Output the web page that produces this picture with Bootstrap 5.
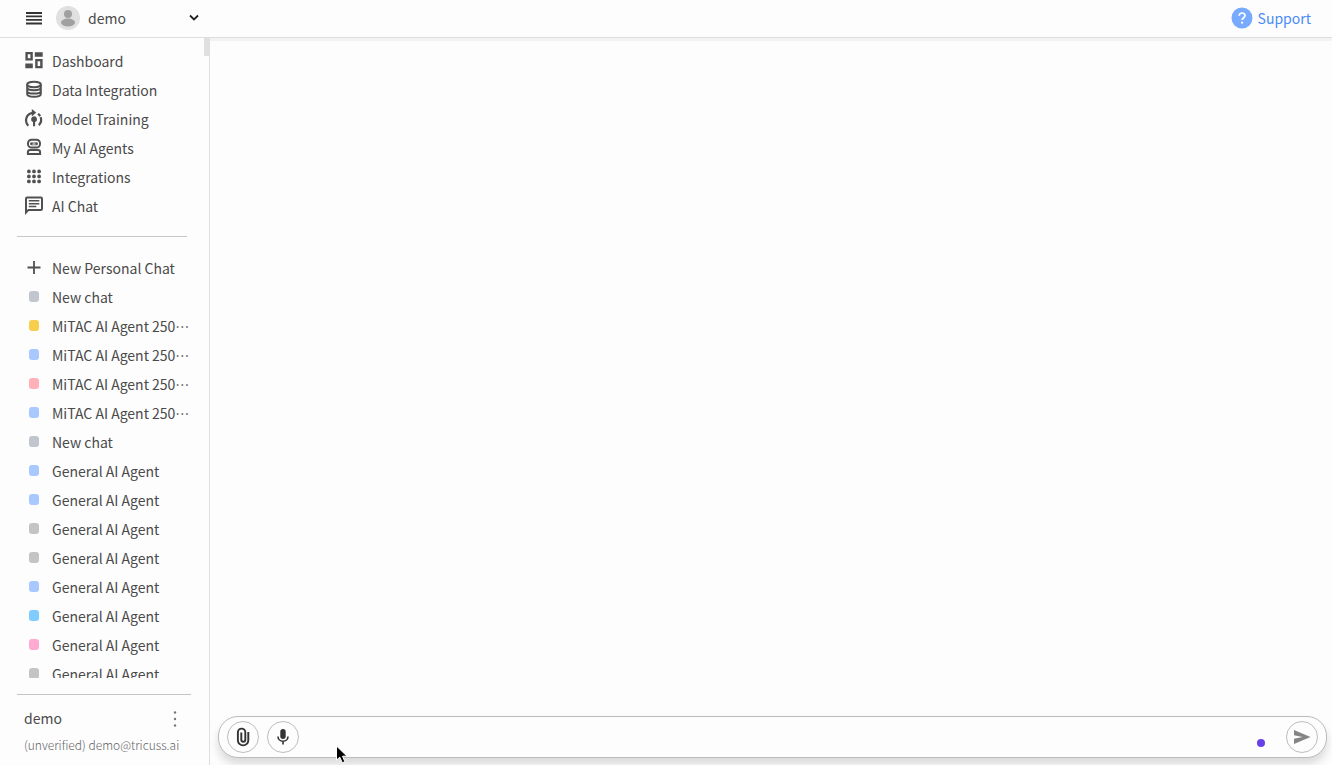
<!DOCTYPE html>
<html lang="en">
<head>
<meta charset="utf-8">
<meta name="viewport" content="width=device-width, initial-scale=1">
<title>AI Chat</title>
<link href="https://cdn.jsdelivr.net/npm/bootstrap@5.3.0/dist/css/bootstrap.min.css" rel="stylesheet">
<style>
body { font-family: "Noto Sans CJK TC", sans-serif; font-size: 14px; line-height: 29px; color: #4a4a4a; background: #fdfdfd; }
button { color: inherit; }
.topbar { height: 38px; border-bottom: 1px solid #dedede; padding: 0 21px 0 26px; }
.topbar svg { margin-bottom: 2px; }
.account { width: 173px; gap: 14px; }
.account-btn, .account-btn:hover { font-size: inherit; line-height: inherit; color: inherit; }
.support { color: #4a8cf7; gap: 5px; }
.sidebar { width: 210px; border-right: 1px solid #dedede; }
.side-scroll { padding: 9px 0 0 17px; margin-bottom: 16px; scrollbar-width: none; }
.side-scroll::-webkit-scrollbar { display: none; }
.thumb { top: 0; right: 0; width: 5px; height: 18px; background: #e0e0e0; }
.side-link { height: 29px; padding-left: 7px; gap: 8px; color: inherit; white-space: nowrap; }
.side-link svg { width: 20px; height: 21px; margin-bottom: 2px; flex: none; }
.divider { width: 170px; margin: 15px 0 17px; border-top: 1px solid #c8c8c8; opacity: 1; }
.dot { width: 10px; height: 11px; border-radius: 3px; margin: 0 5px 2px; flex: none; }
.c-slate { background: #c0c5ce; } .c-gold { background: #f7cf4d; } .c-blue { background: #a8c8ff; }
.c-rose { background: #ffb0b8; } .c-gray { background: #c4c4c4; } .c-sky { background: #80ccff; } .c-pink { background: #ffaad2; }
.profile { margin: 0 18px 0 17px; padding: 9px 7px 8px; border-top: 1px solid #c4c4c4; }
.mail { font-size: 12px; font-weight: 300; line-height: 24px; color: #666; white-space: nowrap; }
.chat { box-shadow: inset 0 3px 0 #f3f3f3; }
.composer { height: 42px; margin: 0 5px 7px 8px; padding: 0 8px; gap: 8px; border: 1px solid #bcbcbc; border-radius: 20px; background: #fdfdfd; box-shadow: 0 6px 8px #dadada; }
.round { width: 32px; height: 32px; border: 1px solid #bebebe; border-radius: 50%; background: #fdfdfd; flex: none; }
.prompt, .prompt:focus { border: 0; box-shadow: none; background: transparent; height: 32px; }
.busy { width: 8px; height: 8px; margin: 12px 13px 0 0; border-radius: 50%; background: #6840e8; flex: none; }
.pointer { left: 335px; top: 745px; pointer-events: none; }
</style>
</head>
<body>
<div class="d-flex flex-column vh-100 overflow-hidden">
  <header class="topbar d-flex flex-shrink-0 align-items-center justify-content-between">
    <div class="account d-flex align-items-center">
      <button type="button" class="btn p-0 border-0 d-flex" aria-label="Menu">
        <svg width="16" height="14" fill="#333"><path d="M0 1h16v2H0zM0 4.5h16v1.8H0zM0 8h16v1.8H0zM0 11.5h16v2H0z"/></svg>
      </button>
      <button type="button" class="account-btn btn p-0 border-0 d-flex flex-fill align-items-center gap-2">
        <svg width="24" height="24"><circle cx="12" cy="12" r="12" fill="#e0e0e0"/><circle cx="12" cy="8" r="4" fill="#a0a0a0"/><ellipse cx="12" cy="16.5" rx="7" ry="4" fill="#a0a0a0"/></svg>
        <span>demo</span>
        <svg class="ms-auto" width="10" height="8" fill="none" stroke="#222" stroke-width="1.8"><path d="M1 1.5l4 4 4-4"/></svg>
      </button>
    </div>
    <a href="#" class="support d-flex align-items-center text-decoration-none">
      <svg width="22" height="22"><circle cx="11" cy="11" r="10.5" fill="#78aaff"/><path d="M8.2 8.7c0-3.7 5.8-3.5 5.8-.2 0 2.2-2.9 2.3-2.9 4.6" fill="none" stroke="#fff" stroke-width="1.7"/><circle cx="11.1" cy="15.7" r="1.1" fill="#fff"/></svg>
      <span>Support</span>
    </a>
  </header>
  <div class="d-flex flex-fill overflow-hidden">
    <aside class="sidebar d-flex flex-column flex-shrink-0 position-relative">
      <div class="thumb position-absolute"></div>
      <nav class="side-scroll flex-fill overflow-auto">
        <a href="#" class="side-link d-flex align-items-center text-decoration-none"><svg viewBox="0 0 20 20" fill="none" stroke="#505050" stroke-width="2.4"><path d="M2.6 2.6h5v6.3h-5zM12.4 9.6h5v7h-5z"/><path d="M10.8 4h7.9M1.3 15.4h7.5" stroke-width="4.6"/></svg>Dashboard</a>
        <a href="#" class="side-link d-flex align-items-center text-decoration-none"><svg viewBox="0 0 20 20" fill="none" stroke="#505050" stroke-width="2"><ellipse cx="10" cy="5" rx="6.8" ry="2.7"/><path d="M3.2 5v9.5c0 3.7 13.6 3.7 13.6 0V5M3.2 8c0 3.6 13.6 3.6 13.6 0M3.2 11.4c0 3.6 13.6 3.6 13.6 0"/></svg>Data Integration</a>
        <a href="#" class="side-link d-flex align-items-center text-decoration-none"><svg viewBox="0 0 20 20" fill="#505050"><path d="M4.3 17.2C.5 13.5 1.4 5.2 8.8 4.3" fill="none" stroke="#505050" stroke-width="2.2"/><path d="M7.8.5l4.4 3.6-4.4 3.8zM10 7.7a3 3 0 0 1 1.1 5.8v4.3H9v-4.3A3 3 0 0 1 10 7.7z"/><path d="M14 5.4c4 2.6 4 8 .8 11.2" fill="none" stroke="#505050" stroke-width="2.2" stroke-dasharray="3 1.2 12"/></svg>Model Training</a>
        <a href="#" class="side-link d-flex align-items-center text-decoration-none"><svg viewBox="0 0 20 20" fill="none" stroke="#505050" stroke-width="2"><rect x="4" y="2.2" width="12" height="7.8" rx="3.6"/><rect x="6" y="4.4" width="8" height="3.6" rx="1.5" fill="#aaa" stroke="none"/><circle cx="7.5" cy="6.2" r="1.2" fill="#505050" stroke="none"/><circle cx="12.5" cy="6.2" r="1.2" fill="#505050" stroke="none"/><path d="M3.9 16.6v-1.7q0-2.3 2.3-2.3h7.6q2.3 0 2.3 2.3v1.7z"/></svg>My AI Agents</a>
        <a href="#" class="side-link d-flex align-items-center text-decoration-none"><svg viewBox="0 0 20 20" fill="none" stroke="#505050" stroke-width="3.8" stroke-linecap="round" stroke-dasharray="0 5.1"><path d="M4.9 4.9h10.3M4.9 9.9h10.3M4.9 14.9h10.3"/></svg>Integrations</a>
        <a href="#" class="side-link d-flex align-items-center text-decoration-none"><svg viewBox="0 0 20 20" fill="none" stroke="#505050" stroke-width="2"><path d="M2 17V3.2Q2 2 3.2 2h13.6Q18 2 18 3.2v10q0 1.2-1.2 1.2H4.5z"/><path d="M4.8 5.3h10.5M4.8 8.2h10.5M4.8 11.1h7.5" stroke-width="1.5"/></svg>AI Chat</a>
        <hr class="divider">
        <a href="#" class="side-link d-flex align-items-center text-decoration-none"><svg viewBox="0 0 20 20" fill="none" stroke="#505050" stroke-width="1.8"><path d="M10 3.5v13M3.5 10h13"/></svg>New Personal Chat</a>
        <a href="#" class="side-link d-flex align-items-center text-decoration-none"><span class="dot c-slate"></span>New chat</a>
        <a href="#" class="side-link d-flex align-items-center text-decoration-none"><span class="dot c-gold"></span><span lang="zh-Hant">MiTAC AI Agent 250…</span></a>
        <a href="#" class="side-link d-flex align-items-center text-decoration-none"><span class="dot c-blue"></span><span lang="zh-Hant">MiTAC AI Agent 250…</span></a>
        <a href="#" class="side-link d-flex align-items-center text-decoration-none"><span class="dot c-rose"></span><span lang="zh-Hant">MiTAC AI Agent 250…</span></a>
        <a href="#" class="side-link d-flex align-items-center text-decoration-none"><span class="dot c-blue"></span><span lang="zh-Hant">MiTAC AI Agent 250…</span></a>
        <a href="#" class="side-link d-flex align-items-center text-decoration-none"><span class="dot c-slate"></span>New chat</a>
        <a href="#" class="side-link d-flex align-items-center text-decoration-none"><span class="dot c-blue"></span>General AI Agent</a>
        <a href="#" class="side-link d-flex align-items-center text-decoration-none"><span class="dot c-blue"></span>General AI Agent</a>
        <a href="#" class="side-link d-flex align-items-center text-decoration-none"><span class="dot c-gray"></span>General AI Agent</a>
        <a href="#" class="side-link d-flex align-items-center text-decoration-none"><span class="dot c-gray"></span>General AI Agent</a>
        <a href="#" class="side-link d-flex align-items-center text-decoration-none"><span class="dot c-blue"></span>General AI Agent</a>
        <a href="#" class="side-link d-flex align-items-center text-decoration-none"><span class="dot c-sky"></span>General AI Agent</a>
        <a href="#" class="side-link d-flex align-items-center text-decoration-none"><span class="dot c-pink"></span>General AI Agent</a>
        <a href="#" class="side-link d-flex align-items-center text-decoration-none"><span class="dot c-gray"></span>General AI Agent</a>
      </nav>
      <div class="profile">
        <div class="d-flex align-items-center justify-content-between">
          <span>demo</span>
          <button type="button" class="btn p-0 border-0 d-flex" aria-label="Account options"><svg width="18" height="18" fill="#777"><circle cx="9" cy="2.5" r="1.2"/><circle cx="9" cy="9" r="1.2"/><circle cx="9" cy="15.5" r="1.2"/></svg></button>
        </div>
        <div class="mail">(unverified) demo@tricuss.ai</div>
      </div>
    </aside>
    <main class="chat d-flex flex-column flex-fill justify-content-end">
      <form class="composer d-flex align-items-center">
        <button type="button" class="round p-0 d-flex align-items-center justify-content-center" aria-label="Attach file"><svg width="14" height="20" fill="none" stroke="#333" stroke-width="1.9"><path d="M12.3 5v8.2a5.2 5.2 0 0 1-10.4 0V5.3a3.7 3.7 0 0 1 7.4 0v7.4a2 2 0 0 1-4 0V5.5"/></svg></button>
        <button type="button" class="round p-0 d-flex align-items-center justify-content-center" aria-label="Record voice"><svg width="14" height="18" fill="#333"><rect x="4.3" y="1" width="5.4" height="10" rx="2.7"/><path d="M2 8.4c0 6.4 10 6.4 10 0M7 13v3.5" fill="none" stroke="#333" stroke-width="1.6"/></svg></button>
        <input class="prompt form-control" type="text" aria-label="Message">
        <span class="busy"></span>
        <button type="submit" class="round p-0 d-flex align-items-center justify-content-center" aria-label="Send"><svg width="18" height="16" fill="#858585"><path d="M1 1l16.5 7L1 15V9.8L9.5 8 1 6.2z"/></svg></button>
      </form>
    </main>
  </div>
</div>
<svg class="pointer position-absolute" width="14" height="20"><path d="M1.5 1v14l3.3-2.8 2.5 5.6 2.6-1.1-2.4-5.5h4.5z" fill="#000" stroke="#fff"/></svg>
<script src="https://cdn.jsdelivr.net/npm/bootstrap@5.3.0/dist/js/bootstrap.bundle.min.js"></script>
</body>
</html>
